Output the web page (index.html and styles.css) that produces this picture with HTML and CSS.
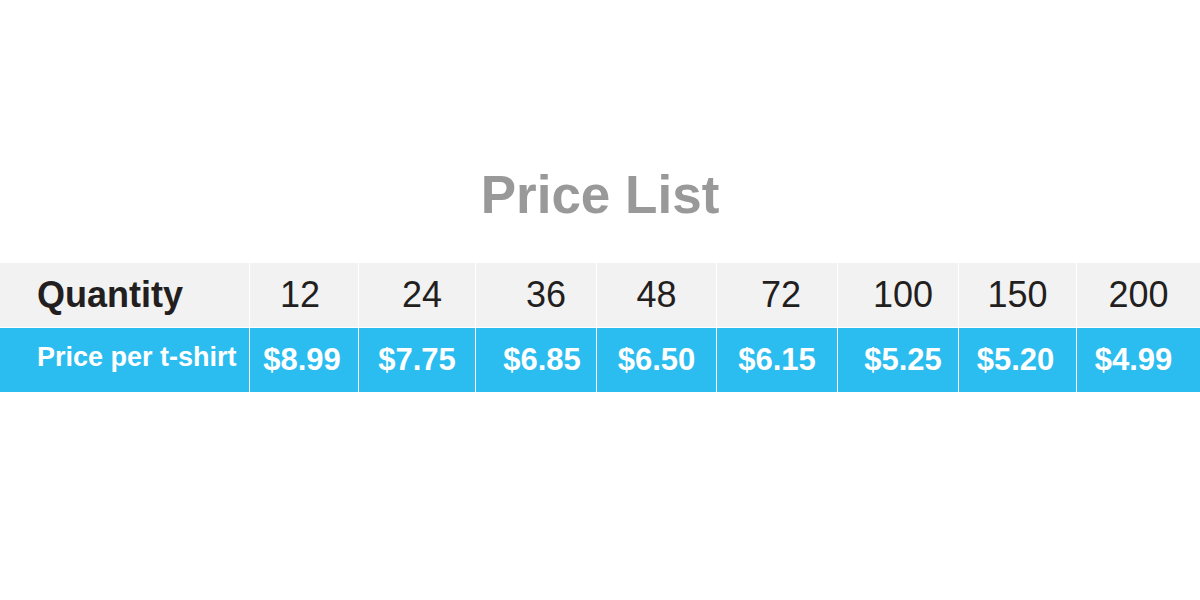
FILE: index.html
```html
<!DOCTYPE html>
<html lang="en">
<head>
<meta charset="utf-8">
<title>Price List</title>
<link rel="stylesheet" href="styles.css">
</head>
<body>
<main class="page">
  <h1 class="title">Price List</h1>
  <div class="price-grid">
    <div class="cell qty label">Quantity</div>
    <div class="cell qty nudge-l4">12</div>
    <div class="cell qty nudge-r5">24</div>
    <div class="cell qty nudge-r10">36</div>
    <div class="cell qty">48</div>
    <div class="cell qty nudge-r4">72</div>
    <div class="cell qty nudge-r5">100</div>
    <div class="cell qty">150</div>
    <div class="cell qty">200</div>

    <div class="cell price label">Price per t-shirt</div>
    <div class="cell price nudge-l2">$8.99</div>
    <div class="cell price">$7.75</div>
    <div class="cell price nudge-r6">$6.85</div>
    <div class="cell price">$6.50</div>
    <div class="cell price">$6.15</div>
    <div class="cell price nudge-r5">$5.25</div>
    <div class="cell price nudge-l2">$5.20</div>
    <div class="cell price nudge-l5">$4.99</div>
  </div>
</main>
</body>
</html>
```

FILE: styles.css
```css
html, body {
  margin: 0;
  padding: 0;
  background: #ffffff;
}

.page {
  width: 1200px;
  height: 600px;
  padding-top: 165px;
  box-sizing: border-box;
  font-family: "Liberation Sans", Arial, sans-serif;
}

.title {
  margin: 0 0 38px 0;
  height: 60px;
  line-height: 60px;
  font-size: 53px;
  font-weight: 700;
  color: #999999;
  text-align: center;
}

.price-grid {
  display: grid;
  grid-template-columns: 249px 108px 116px 120px 119px 120px 120px 117px 123px;
  grid-template-rows: 64px 64px;
  column-gap: 1px;
  row-gap: 1px;
}

.cell {
  display: flex;
  align-items: center;
  justify-content: center;
  white-space: nowrap;
  box-sizing: border-box;
}

.qty {
  background: #f2f2f2;
  color: #231f20;
  font-size: 36px;
  font-weight: 400;
}

.qty.label {
  justify-content: flex-start;
  padding-left: 37px;
  font-weight: 700;
  font-size: 36px;
}

.price {
  background: #2cbdf0;
  color: #ffffff;
  font-size: 31px;
  font-weight: 700;
}

.price.label {
  justify-content: flex-start;
  padding-left: 37px;
  padding-bottom: 5px;
  font-size: 27px;
}

.nudge-l2 { padding-right: 4px; }
.nudge-l4 { padding-right: 8px; }
.nudge-l5 { padding-right: 10px; }
.nudge-r4 { padding-left: 8px; }
.nudge-r5 { padding-left: 10px; }
.nudge-r6 { padding-left: 12px; }
.nudge-r10 { padding-left: 20px; }
```
